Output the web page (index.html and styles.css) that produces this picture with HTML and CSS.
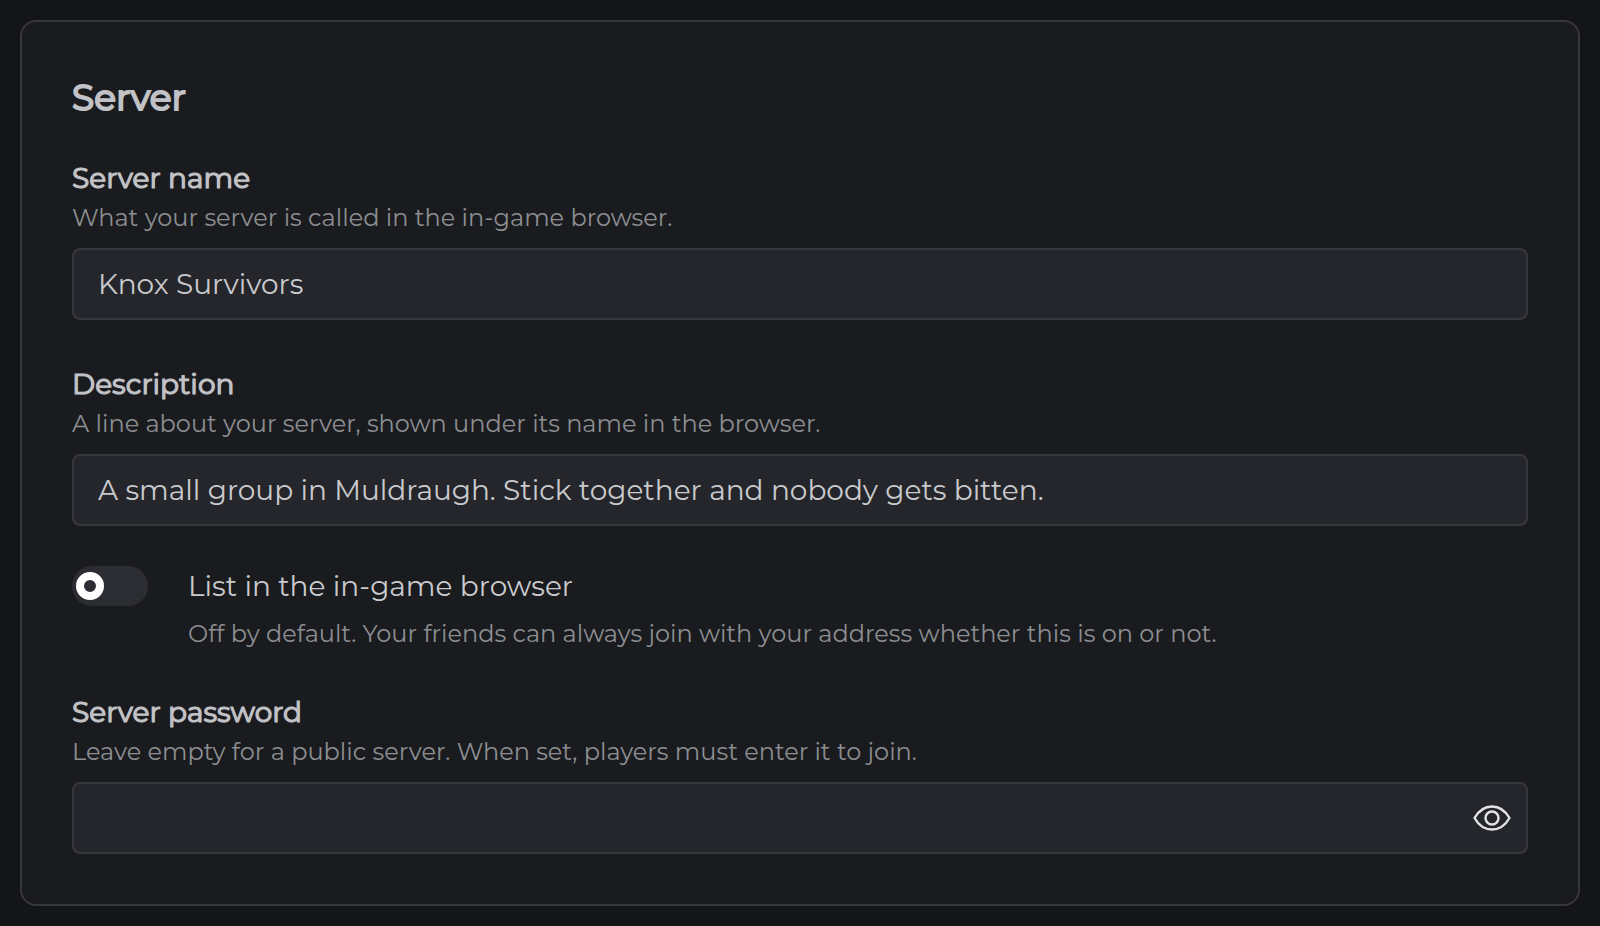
FILE: index.html
```html
<!DOCTYPE html>
<html lang="en">
<head>
<meta charset="utf-8">
<meta name="viewport" content="width=device-width, initial-scale=1">
<title>Server</title>
<link rel="stylesheet" href="styles.css">
</head>
<body>
<form class="card">
  <h2 class="title">Server</h2>
  <div class="field">
    <label class="label" for="name">Server name</label>
    <p class="hint" id="name-hint">What your server is called in the in-game browser.</p>
    <input class="input" id="name" type="text" value="Knox Survivors" aria-describedby="name-hint">
  </div>
  <div class="field field-description">
    <label class="label" for="description">Description</label>
    <p class="hint" id="description-hint">A line about your server, shown under its name in the browser.</p>
    <input class="input" id="description" type="text" value="A small group in Muldraugh. Stick together and nobody gets bitten." aria-describedby="description-hint">
  </div>
  <div class="toggle">
    <input class="switch" id="listed" type="checkbox" role="switch" aria-describedby="listed-hint">
    <div class="toggle-text">
      <label class="toggle-label" for="listed">List in the in-game browser</label>
      <p class="hint" id="listed-hint">Off by default. Your friends can always join with your address whether this is on or not.</p>
    </div>
  </div>
  <div class="field">
    <label class="label" for="password">Server password</label>
    <p class="hint" id="password-hint">Leave empty for a public server. When set, players must enter it to join.</p>
    <div class="input password">
      <input class="password-input" id="password" type="password" aria-describedby="password-hint">
      <button class="reveal" type="button" aria-label="Show password">
        <svg class="eye" viewBox="0 0 40 28" fill="none" stroke="currentColor" stroke-width="2.4" stroke-linejoin="round">
          <path d="M2.500 14C7 6.200 12.500 2.500 20 2.500s13 3.700 17.500 11.500c-4.500 7.800-10 11.500-17.500 11.500S7 21.800 2.500 14Z"/>
          <circle cx="20" cy="14" r="6.500"/>
        </svg>
      </button>
    </div>
  </div>
</form>
</body>
</html>
```
FILE: styles.css
```css
* { box-sizing: border-box; }
body {
  margin: 0;
  padding: 20px;
  background: #141517;
  color: #c1c2c5;
  font-family: Montserrat, "Noto Sans", sans-serif;
}
.card {
  padding: 50px;
  border: 2px solid #37373e;
  border-radius: 16px;
  background: #1a1b1e;
}
.title { margin: 0 0 33px; font-size: 36px; line-height: 50px; font-weight: 400; -webkit-text-stroke: 2px; }
.field { display: flex; flex-direction: column; margin-bottom: 41px; }
.field:last-child { margin-bottom: 0; }
.field-description { margin-bottom: 40px; }
.label { font-size: 28px; line-height: 46px; -webkit-text-stroke: 1px; text-shadow: 0 0 1px currentColor; }
.hint { margin: 0; font-size: 24px; line-height: 34px; color: #8c8e92; }
.input {
  height: 72px;
  margin-top: 13px;
  padding: 0 24px;
  border: 2px solid #37373e;
  border-radius: 8px;
  background: #25262b;
  color: #c9cacd;
  font-family: inherit;
  font-size: 28px;
}
.toggle { display: flex; gap: 40px; margin-bottom: 38px; }
.switch {
  appearance: none;
  display: flex;
  align-items: center;
  flex: none;
  width: 76px;
  height: 40px;
  margin: 0;
  padding: 0 4px;
  border-radius: 20px;
  background: #2c2d32;
}
.switch::before {
  content: "";
  box-sizing: border-box;
  width: 28px;
  height: 28px;
  border: 8px solid #fff;
  border-radius: 50%;
}
.switch:checked { justify-content: flex-end; }
.toggle-label { display: block; margin-bottom: 11px; font-size: 28px; line-height: 40px; color: #c9cacd; }
.password { display: flex; align-items: center; padding: 0 14px 0 0; }
.password-input { flex: 1; min-width: 0; height: 100%; padding: 0 24px; border: 0; background: transparent; color: inherit; font: inherit; }
.reveal { display: flex; padding: 0; border: 0; background: none; color: #e2e3e5; }
.eye { width: 40px; height: 28px; }
```
